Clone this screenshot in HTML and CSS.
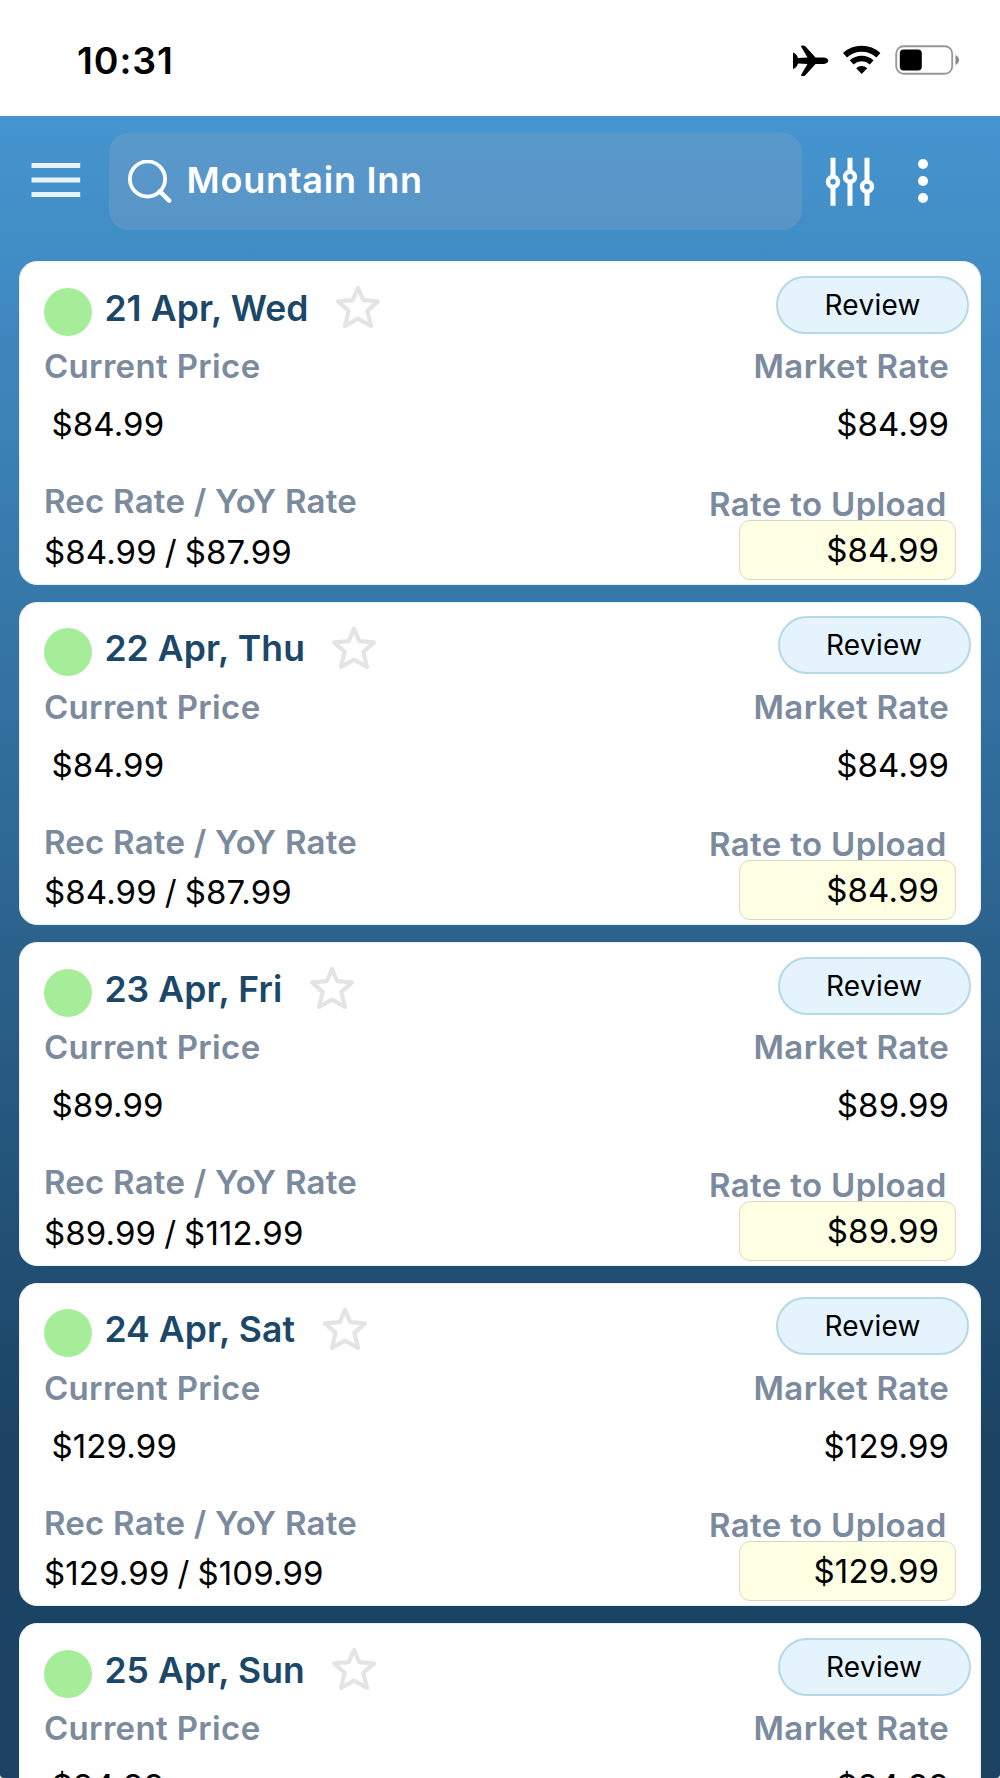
FILE: index.html
```html
<!DOCTYPE html>
<html lang="en">
<head>
  <meta charset="UTF-8" />
  <meta name="viewport" content="width=device-width, initial-scale=1.0" />
  <title>Mountain Inn - Rates</title>
  <link rel="stylesheet" href="styles.css">
</head>
<body>

  <div class="status-bar">
    <span class="time">10:31</span>
    <div class="status-icons">
      <svg class="plane" width="36" height="32" viewBox="0 0 36 32">
        <path d="M0 7.5Q3.5 8.5 5 13L14.5 12.5L8 1.5Q8 .5 9 .5H10.5Q12 .7 13 2L22.5 12.5H31Q35.3 13.5 35.3 15.8Q35.3 18 31 19H22.5L13 29.5Q12 31 10.5 31H9Q8 31 8 30L14.5 19L5 18.5Q3.5 23 0 24Z" fill="#000" />
      </svg>
      <svg class="wifi" width="40" height="30" viewBox="0 0 40 30">
        <g fill="none" stroke="#000">
          <path d="M3 10.2A25 25 0 0 1 36.4 10.2" stroke-width="6" />
          <path d="M9.7 17.3A15 15 0 0 1 29.7 17.3" stroke-width="5.6" />
        </g>
        <path d="M14.2 23.2A8 8 0 0 1 25.2 23.2L19.7 29Z" fill="#000" />
      </svg>
      <svg class="battery" width="65" height="30" viewBox="0 0 65 30">
        <rect x="1.2" y="1.2" width="56" height="27.6" rx="7.5" fill="none" stroke="#999" stroke-width="1.9" />
        <rect x="4.8" y="4.5" width="22" height="21" rx="4" fill="#000" />
        <path d="M60.5 10Q64 12 64 15T60.5 20Z" fill="#888" />
      </svg>
    </div>
  </div>

  <header class="site-header">
    <button class="menu-toggle" aria-label="Open navigation menu">
      <svg width="50" height="38" viewBox="0 0 50 38">
        <path d="M.5 4.4H49.2M.5 19H49.2M.5 33.5H49.2" stroke="#fff" stroke-width="5" stroke-opacity=".88" />
      </svg>
    </button>
    <div class="search-box">
      <svg width="44" height="44" viewBox="0 0 44 44" fill="none" stroke="#fff">
        <circle cx="19.5" cy="19" r="17.6" stroke-width="3.8" />
        <path d="M31.8 31.4L41.2 40.6" stroke-width="4.4" stroke-linecap="round" />
      </svg>
      <span>Mountain Inn</span>
    </div>
    <button class="filter-btn" aria-label="Filters">
      <svg width="50" height="50" viewBox="0 0 50 50" fill="none" stroke="#fff">
        <path d="M8 .8V19.5M8 29.5V48.8M25 .8V14.5M25 24.5V48.8M42 .8V24.5M42 34.5V48.8" stroke-width="5" />
        <g stroke-width="4.4">
          <circle cx="8" cy="24.8" r="5" />
          <circle cx="25" cy="19.8" r="5" />
          <circle cx="42" cy="29.6" r="5" />
        </g>
      </svg>
    </button>
    <button class="more-btn" aria-label="More options">
      <svg width="12" height="46" viewBox="0 0 12 46" fill="#fff">
        <circle cx="6" cy="6" r="5" />
        <circle cx="6" cy="23" r="5" />
        <circle cx="6" cy="40" r="5" />
      </svg>
    </button>
  </header>

  <main id="rate-list"></main>

  <script>
    const rates = [
      { date: '21 Apr, Wed', price: '$84.99', yoy: '$87.99' },
      { date: '22 Apr, Thu', price: '$84.99', yoy: '$87.99' },
      { date: '23 Apr, Fri', price: '$89.99', yoy: '$112.99' },
      { date: '24 Apr, Sat', price: '$129.99', yoy: '$109.99' },
      { date: '25 Apr, Sun', price: '$84.99' }
    ];

    document.getElementById('rate-list').innerHTML = rates.map(r => `
      <section class="card">
        <div class="card-top">
          <span class="dot"></span>
          <h2>${r.date}</h2>
          <svg class="star" width="48" height="46" viewBox="0 0 48 46">
            <path d="M24 4L29.3 16.2L44 17.4L33.3 26.8L37 42L24 34.6L11 42L14.7 26.8L4 17.4L18.7 16.2Z" fill="none" stroke="#e4e4e4" stroke-width="4.2" stroke-linejoin="round" />
          </svg>
          <button class="review">Review</button>
        </div>
        <div class="row labels">
          <span>Current Price</span>
          <span>Market Rate</span>
        </div>
        <div class="row prices">
          <span>${r.price}</span>
          <span>${r.price}</span>
        </div>
        ${r.yoy ? `<div class="row bottom">
          <div class="rec">
            <span class="label">Rec Rate / YoY Rate</span>
            <span class="value">${r.price} / ${r.yoy}</span>
          </div>
          <div class="upload">
            <span class="label">Rate to Upload</span>
            <div class="upload-rate">${r.price}</div>
          </div>
        </div>` : ''}
      </section>`).join('');
  </script>

</body>
</html>
```

FILE: styles.css
```css
:root {
  --grad-start: #4595d0;
  --grad-end: #1b4363;
  --text-date: #1b4769;
  --text-label: #7b8a9c;
}

* { box-sizing: border-box; margin: 0; padding: 0; }

html { background: #fff; }

body {
  height: 1778px;
  overflow: hidden;
  border-radius: 0 0 4px 4px;
  font-family: Inter, sans-serif;
  color: #000;
  background: linear-gradient(to bottom, var(--grad-start) 116px, var(--grad-end) 1450px);
}

button { background: none; border: none; font-family: inherit; }
svg { display: block; }

.status-bar {
  height: 116px;
  padding: 0 40px 0 77px;
  display: flex;
  justify-content: space-between;
  align-items: flex-start;
  background: #fff;
}

.time {
  margin-top: 38.5px;
  font-size: 37.5px;
  line-height: 44px;
  font-weight: 600;
  letter-spacing: 0.9px;
}

.status-icons { display: flex; margin-top: 45px; }
.wifi { margin-left: 13px; }
.battery { margin-left: 13px; }

.site-header {
  height: 145px;
  padding: 17px 0 0 31px;
  display: flex;
  align-items: flex-start;
}

.menu-toggle { margin-top: 28px; }

.search-box {
  width: 693px;
  height: 97px;
  margin-left: 28px;
  padding-left: 19px;
  display: flex;
  align-items: center;
  border-radius: 20px;
  background: rgba(122, 160, 200, 0.4);
}

.search-box span {
  margin: -4px 0 0 14.5px;
  font-size: 36px;
  font-weight: 600;
  letter-spacing: 0.75px;
  color: #fff;
}

.filter-btn { margin: 24px 0 0 23px; }
.more-btn { margin: 25px 0 0 41.5px; }

#rate-list {
  display: flex;
  flex-direction: column;
  gap: 17px;
  padding: 0 19.4px;
}

.card {
  height: 323.5px;
  flex: none;
  padding: 13.5px 10.5px 0 23.5px;
  border: 1px solid #eceff1;
  border-radius: 18px;
  background: #fff;
}

.card-top { display: flex; height: 64px; }

.dot {
  width: 48px;
  height: 48px;
  margin-top: 12px;
  border-radius: 50%;
  background: #a6ed9a;
}

h2 {
  margin: 11px 0 0 12.5px;
  font-size: 35.5px;
  line-height: 44px;
  font-weight: 600;
  letter-spacing: 0.1px;
  color: var(--text-date);
}

.star { margin: 8.5px 0 0 25.5px; }

.review {
  width: 193px;
  height: 58px;
  margin-left: auto;
  margin-right: -1.5px;
  border: 2px solid #b5d9e7;
  border-radius: 29px;
  background: #e5f3fd;
  font-size: 28px;
  letter-spacing: 0.3px;
  color: #000;
}

.card:nth-child(3n + 1) .review { margin-right: 0; }

.row { display: flex; justify-content: space-between; }

.labels, .label {
  font-size: 33px;
  line-height: 40px;
  font-weight: 600;
  letter-spacing: 0.35px;
  color: var(--text-label);
}

.labels { padding-right: 20px; margin-top: 6.5px; }

.prices {
  padding: 0 20px 0 7.5px;
  margin-top: 18px;
  font-size: 33px;
  line-height: 40px;
  letter-spacing: 0.15px;
}

.rec { display: flex; flex-direction: column; margin-top: 37px; }
.rec .label { letter-spacing: 0.25px; }

.value {
  margin-top: 10.5px;
  font-size: 33px;
  line-height: 40px;
  letter-spacing: 0.15px;
  word-spacing: -1.5px;
}

.upload {
  display: flex;
  flex-direction: column;
  align-items: flex-end;
  margin: 39.5px 13px 0 0;
}

.upload .label { margin-right: 9.5px; }

.upload-rate {
  position: relative;
  width: 217px;
  height: 60px;
  margin-top: -4px;
  padding-right: 16px;
  border: 1.5px solid #d9d9c3;
  border-radius: 11px;
  background: #feffe3;
  font-size: 33px;
  line-height: 59px;
  letter-spacing: 0.15px;
  text-align: right;
}
```
